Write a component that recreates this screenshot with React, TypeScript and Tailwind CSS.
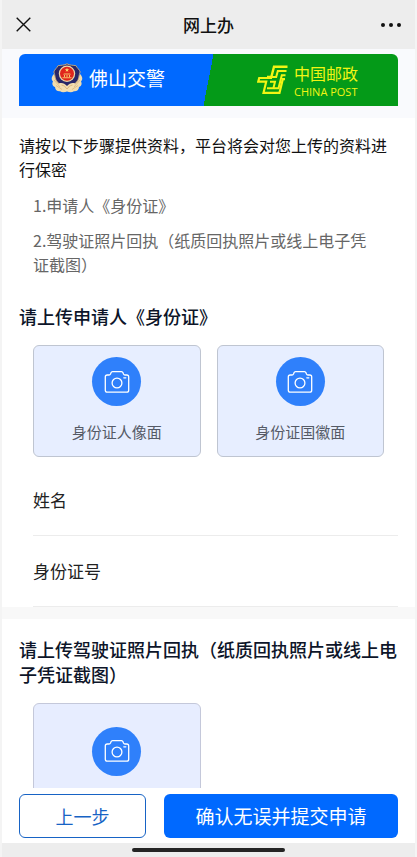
import React from "react";

function CameraBadge() {
  return (
    <span className="flex size-[49px] items-center justify-center rounded-full bg-[#2f80fb]">
      <svg width="26" height="24" viewBox="0 0 26 24" fill="none" stroke="#fff" strokeWidth="1.3" strokeLinejoin="round" strokeLinecap="round" aria-hidden="true">
        <path d="M3.2 5H5C5.800 5 6.200 4.700 6.500 4L7 2.700C7.300 1.900 7.800 1.600 8.500 1.600H17.500C18.200 1.600 18.700 1.900 19 2.700L19.500 4C19.800 4.700 20.200 5 21 5H22.800C24 5 24.700 5.800 24.700 7V20.200C24.700 21.500 24 22.200 22.800 22.200H3.200C2 22.200 1.300 21.500 1.300 20.200V7C1.300 5.800 2 5 3.200 5Z" />
        <circle cx="13" cy="13" r="4.900" />
        <path d="M19.800 7.800H21.800" />
      </svg>
    </span>
  );
}

function PoliceEmblem() {
  return (
    <svg width="32" height="30" viewBox="0 0 32 30" aria-hidden="true">
      <path d="M3 11C0 14 .3 17 2 18.500C.5 21 2 23.500 4 24C4 27 6.500 28.500 9 28.200C11.500 29.800 14 29 16 28.400C18 29 20.500 29.800 23 28.200C25.500 28.500 28 27 28 24C30 23.500 31.500 21 30 18.500C31.700 17 32 14 29 11L24 20L16 24L8 20Z" fill="#f0dcb0" />
      <path d="M3 17L9 24M5 22.500L11 26.500M29 17L23 24M27 22.500L21 26.500" stroke="#d8b27a" strokeWidth=".7" fill="none" />
      <path d="M16 .8C18.500 2.400 22.500 2.200 25 2.700C26 5 28.500 6.500 29.200 9C27.500 12 28.800 17 24 20.500C21.500 22.300 18 22.500 16 24.500C14 22.500 10.500 22.300 8 20.500C3.200 17 4.500 12 2.800 9C3.500 6.500 6 5 7 2.700C9.500 2.200 13.500 2.400 16 .8Z" fill="#292767" stroke="#c9ad7c" strokeWidth=".9" />
      <circle cx="16" cy="10.800" r="8.200" fill="#efd9a8" />
      <circle cx="16" cy="10.800" r="7" fill="#e0261c" />
      <path d="M16 4.800L16.600 6.300H18.200L16.900 7.300L17.400 8.800L16 7.900L14.600 8.800L15.100 7.300L13.800 6.300H15.400Z" fill="#ffd76b" />
      <path d="M13 10.500H19L20 11.500H12ZM13 12H14V14H13ZM15.500 12H16.500V14H15.500ZM18 12H19V14H18ZM11.500 14.200H20.500V15.200H11.500Z" fill="#f6c46a" />
      <path d="M8 20.500C11 19.500 13.500 20.500 16 23C18.500 20.500 21 19.500 24 20.500C23 24.500 19.500 27 16 28C12.500 27 9 24.500 8 20.500Z" fill="#f4dfb2" />
      <path d="M10.500 22C13 22.500 14.800 24 16 26C17.200 24 19 22.500 21.500 22" stroke="#d2a666" strokeWidth=".7" fill="none" />
    </svg>
  );
}

function PostLogo() {
  return (
    <svg width="31" height="30" viewBox="0 0 31 30" fill="none" stroke="#f2f514" strokeWidth="2" aria-hidden="true">
      <path d="M30.500 1.700H17L14.300 12H10" strokeWidth="2.400" />
      <path d="M29.500 6H20.800L19.200 12H14" />
      <path d="M28.500 10.200H24.800L21.500 23.200H17" />
      <path d="M28 14.200H25.800L22.500 27.800H6.500L9.200 16.700H1.200L2.200 13H15" strokeWidth="2.200" />
      <path d="M13 16.700H18L16.400 23.200H10" />
    </svg>
  );
}

function UploadCard({ label }: { label: string }) {
  return (
    <button type="button" className="flex h-28 flex-col items-center rounded-md border border-[#bfc5d1] bg-[#e7eeff] pt-[11px] text-[15px] leading-6 text-[#555a66]">
      <CameraBadge />
      <span className="mt-3.5">{label}</span>
    </button>
  );
}

function Field({ id, label }: { id: string; label: string }) {
  return (
    <div className="ml-3.5 flex h-[71px] items-center border-b border-[#ececec]">
      <label htmlFor={id} className="w-24 shrink-0 text-[17px] text-[#222]">{label}</label>
      <input id={id} type="text" className="min-w-0 flex-1 bg-transparent text-[17px] outline-none" />
    </div>
  );
}

export default function App() {
  return (
    <div className="flex h-screen flex-col bg-[#f4f4f4] px-0.5 font-['Noto_Sans_CJK_SC',sans-serif]">
      <header className="flex h-[49px] shrink-0 items-center justify-between bg-[#ededed] px-3.5">
        <button type="button" aria-label="关闭" className="w-6">
          <svg width="15" height="15" viewBox="0 0 15 15" stroke="#111" strokeWidth="1.400" aria-hidden="true">
            <path d="M.7.7L14.300 14.300M14.300.7L.7 14.300" />
          </svg>
        </button>
        <h1 className="text-[17px] font-medium text-[#111]">网上办</h1>
        <button type="button" aria-label="更多" className="flex w-6 items-center justify-end gap-1">
          <span className="size-1 rounded-full bg-[#111]" />
          <span className="size-1 rounded-full bg-[#111]" />
          <span className="size-1 rounded-full bg-[#111]" />
        </button>
      </header>

      <main className="min-h-0 flex-1 overflow-y-auto bg-white [scrollbar-width:none]">
        <div className="bg-[#f9fafd] px-[17px] pt-[5px] pb-3">
          <div className="flex h-13 overflow-hidden rounded-t-md bg-[linear-gradient(101deg,#0069ff_50%,#049a18_50%)]">
            <div className="flex w-1/2 items-center gap-1.5 pb-1 pl-8 text-[19px] text-white">
              <PoliceEmblem />
              <span>佛山交警</span>
            </div>
            <div className="flex w-1/2 items-center justify-end gap-1.5 pr-10 text-[#f2f514]">
              <PostLogo />
              <div>
                <div className="text-base leading-[22px]">中国邮政</div>
                <div className="font-['Open_Sans',sans-serif] text-[11px] leading-[15px]">CHINA POST</div>
              </div>
            </div>
          </div>
        </div>

        <section className="px-[17px] pt-[15px]">
          <p className="text-base text-[#111]">请按以下步骤提供资料，平台将会对您上传的资料进行保密</p>
          <div className="mt-3 flex flex-col gap-[11px] pr-5 pl-3.5 text-base text-[#666]">
            <p>1.申请人《身份证》</p>
            <p>2.驾驶证照片回执（纸质回执照片或线上电子凭证截图）</p>
          </div>
          <h2 className="mt-7 text-lg leading-[25px] font-medium text-[#0d1529]">请上传申请人《身份证》</h2>
          <div className="mt-4 mb-2 grid grid-cols-2 gap-4 px-3.5">
            <UploadCard label="身份证人像面" />
            <UploadCard label="身份证国徽面" />
          </div>
          <Field id="name" label="姓名" />
          <Field id="id-number" label="身份证号" />
        </section>

        <div className="h-3 bg-[#f8f8f8]" />

        <section className="px-[17px] pt-[18px] pb-4">
          <h2 className="text-lg leading-[25px] font-medium text-[#0d1529]">请上传驾驶证照片回执（纸质回执照片或线上电子凭证截图）</h2>
          <div className="mt-4 grid grid-cols-2 gap-4 px-3.5">
            <button type="button" aria-label="上传驾驶证照片回执" className="flex h-28 items-center justify-center rounded-md border border-[#c4c8da] bg-[#e7edff] pb-4">
              <CameraBadge />
            </button>
          </div>
        </section>
      </main>

      <footer className="flex shrink-0 gap-[18px] bg-white px-[17px] pt-1.5 pb-[5px]">
        <button type="button" className="h-11 flex-1 rounded-md border border-[#1763c5] text-lg text-[#1763c5]">上一步</button>
        <button type="button" className="h-11 flex-[1.87] rounded-md bg-[#0069ff] text-[19px] text-white">确认无误并提交申请</button>
      </footer>
      <div className="flex h-3.5 shrink-0 items-center justify-center bg-[#ededed]">
        <div className="h-1 w-[37%] rounded-full bg-[#242424]" />
      </div>
    </div>
  );
}
